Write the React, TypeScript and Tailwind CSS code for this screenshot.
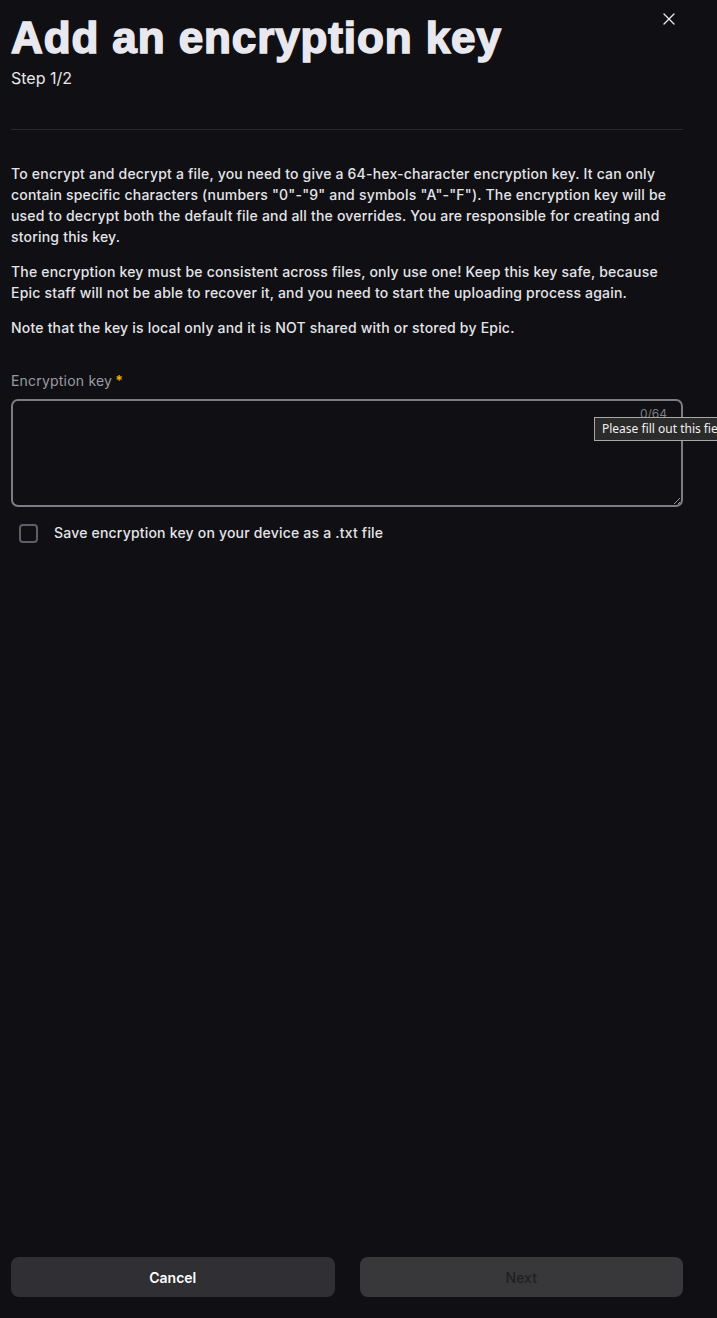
import { X } from "lucide-react"

export default function App() {
  return (
    <div className="relative flex h-[1318px] w-full flex-col overflow-hidden bg-[#101014] font-['Inter','Noto_Sans',sans-serif] text-[#e6e6ea]">
      <div className="flex flex-1 flex-col pl-[11px]">
        <div className="w-[672px]">
          {/* Header */}
          <div className="relative pt-[14px]">
            <h1 className="font-['Liberation_Sans',Arial,sans-serif] text-[44px] font-bold leading-[48px] tracking-[0.9px] text-[#e8e8ee] [-webkit-text-stroke:1.6px_#e8e8ee]">
              Add an encryption key
            </h1>
            <div className="mt-[6px] text-[16px] leading-[20px] text-[#e6e6ea]">Step 1/2</div>
            <button className="absolute right-[4px] top-[9px] text-[#e8e8ee]">
              <X className="h-[20px] w-[20px]" strokeWidth={1.6} />
            </button>
          </div>

          <div className="mt-[41px] h-px w-full bg-[#2a2a30]" />

          {/* Description */}
          <div className="mt-[33px] flex flex-col gap-[14px] text-[14px] font-medium leading-[21px] tracking-[0.2px] text-[#e4e4e8]">
            <p>
              To encrypt and decrypt a file, you need to give a 64-hex-character encryption key. It can only contain
              specific characters (numbers "0"-"9" and symbols "A"-"F"). The encryption key will be used to decrypt both
              the default file and all the overrides. You are responsible for creating and storing this key.
            </p>
            <p>
              The encryption key must be consistent across files, only use one! Keep this key safe, because Epic staff
              will not be able to recover it, and you need to start the uploading process again.
            </p>
            <p>Note that the key is local only and it is NOT shared with or stored by Epic.</p>
          </div>

          {/* Field */}
          <div className="mt-[33px]">
            <label className="flex items-center text-[14px] leading-[20px] tracking-[0.2px] text-[#9a9aa2]">
              Encryption key<span className="ml-[3px] font-semibold text-[#f2b705]">*</span>
            </label>
            <div className="relative mt-[8px]">
              <textarea
                className="block h-[108px] w-full resize-y rounded-[7px] border-2 border-[#7c7c82] bg-[#101014] px-[12px] py-[10px] text-[14px] text-[#e6e6ea] outline-none"
                required
              />
              <span className="absolute right-[16px] top-[7px] text-[12px] leading-[16px] text-[#7c7c84]">0/64</span>
            </div>
          </div>

          <label className="mt-[16px] flex items-center gap-[16px] pl-[8px]">
            <span className="h-[19px] w-[19px] rounded-[4px] border-2 border-[#5e5e64]" />
            <span className="text-[14px] font-medium leading-[20px] tracking-[0.2px] text-[#e4e4e8]">
              Save encryption key on your device as a .txt file
            </span>
          </label>
        </div>

        <div className="flex-1" />

        {/* Footer */}
        <div className="mb-[21px] flex w-[672px] gap-[25px]">
          <button className="h-[40px] flex-1 rounded-[8px] bg-[#2f2f34] text-[14px] font-semibold text-white">
            Cancel
          </button>
          <button disabled className="h-[40px] flex-1 rounded-[8px] bg-[#38383b] text-[14px] font-medium text-[#1f1f22]">
            Next
          </button>
        </div>
      </div>

      {/* Native validation tooltip */}
      <div className="absolute left-[594px] top-[417px] whitespace-nowrap border border-[#a8a8a8] bg-[#2b2b2b] px-[7px] py-[3px] font-['Noto_Sans',sans-serif] text-[12px] leading-[16px] text-[#f0f0f0]">
        Please fill out this field.
      </div>
    </div>
  )
}
